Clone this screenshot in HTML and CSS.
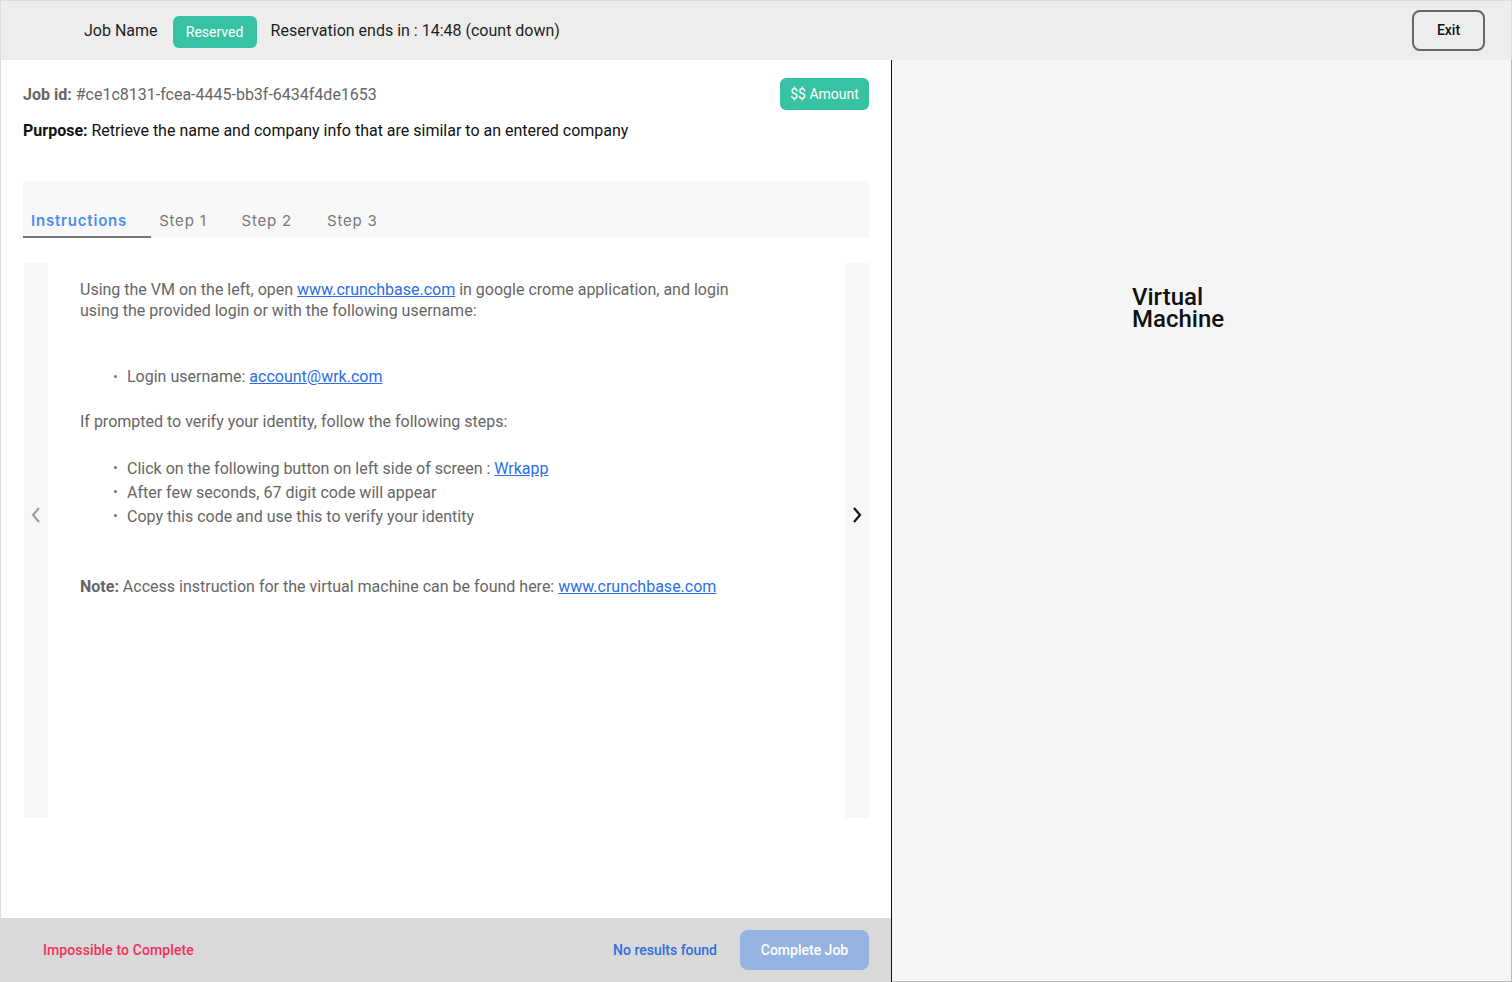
FILE: index.html
```html
<!DOCTYPE html>
<html>
<head>
<meta charset="utf-8">
<link rel="stylesheet" href="styles.css">
</head>
<body>
<div class="app">
  <header class="topbar">
    <span class="job-name">Job Name</span>
    <span class="badge">Reserved</span>
    <span class="countdown">Reservation ends in : 14:48 (count down)</span>
    <span class="spacer"></span>
    <button class="exit">Exit</button>
  </header>
  <div class="main">
    <section class="left">
      <div class="left-body">
        <div class="meta-row">
          <div class="jobid"><b>Job id:</b> #ce1c8131-fcea-4445-bb3f-6434f4de1653</div>
          <button class="amount">$$ Amount</button>
        </div>
        <div class="purpose"><b>Purpose:</b> Retrieve the name and company info that are similar to an entered company</div>
        <nav class="tabs">
          <span class="tab active">Instructions</span>
          <span class="tab">Step 1</span>
          <span class="tab">Step 2</span>
          <span class="tab">Step 3</span>
        </nav>
        <div class="carousel">
          <div class="side side-left">
            <svg width="14" height="20" viewBox="0 0 14 20"><path d="M10 3 L4 10 L10 17" fill="none" stroke="#9a9a9a" stroke-width="2"/></svg>
          </div>
          <div class="slide">
            <p class="p1">Using the VM on the left, open <a href="#">www.crunchbase.com</a> in google crome application, and login using the provided login or with the following username:</p>
            <ul class="list l1">
              <li>Login username: <a href="#">account@wrk.com</a></li>
            </ul>
            <p class="p2">If prompted to verify your identity, follow the following steps:</p>
            <ul class="list l2">
              <li>Click on the following button on left side of screen : <a href="#">Wrkapp</a></li>
              <li>After few seconds, 67 digit code will appear</li>
              <li>Copy this code and use this to verify your identity</li>
            </ul>
            <p class="note"><b>Note:</b> Access instruction for the virtual machine can be found here: <a href="#">www.crunchbase.com</a></p>
          </div>
          <div class="side side-right">
            <svg width="14" height="20" viewBox="0 0 14 20"><path d="M4 3 L10 10 L4 17" fill="none" stroke="#111" stroke-width="2.2"/></svg>
          </div>
        </div>
      </div>
      <footer class="footer">
        <span class="impossible">Impossible to Complete</span>
        <span class="spacer"></span>
        <span class="noresults">No results found</span>
        <button class="complete">Complete Job</button>
      </footer>
    </section>
    <section class="right">
      <div class="vm">Virtual<br>Machine</div>
    </section>
  </div>
</div>
</body>
</html>
```

FILE: styles.css
```css
* { box-sizing: border-box; }
html, body { margin: 0; padding: 0; }
body {
  font-family: Roboto, "Liberation Sans", sans-serif;
  color: #222;
  width: 1512px;
  height: 982px;
  overflow: hidden;
}
.app {
  display: flex;
  flex-direction: column;
  height: 982px;
}
.topbar {
  height: 60px;
  flex: none;
  background: #ededed;
  border-top: 1px solid #dcdcdc;
  border-left: 1px solid #dcdcdc;
  border-right: 1px solid #dcdcdc;
  display: flex;
  align-items: center;
  padding: 0 26px 0 83px;
}
.job-name { font-size: 16px; color: #1e1e1e; }
.badge {
  margin-left: 15px;
  background: #38c2a4;
  color: #fff;
  font-size: 14px;
  height: 32px;
  width: 84px;
  border-radius: 6px;
  display: flex;
  align-items: center;
  justify-content: center;
  margin-top: 2px;
}
.countdown { margin-left: 14px; font-size: 16px; color: #1e1e1e; }
.spacer { flex: 1; }
.exit {
  width: 73px;
  height: 41px;
  border: 2px solid #666;
  border-radius: 8px;
  background: transparent;
  font-family: Roboto, sans-serif;
  font-weight: 500;
  font-size: 14px;
  color: #111;
  margin-top: -1px;
}
.main { flex: 1; display: flex; min-height: 0; }
.left {
  width: 892px;
  flex: none;
  background: #fff;
  border-left: 1px solid #dcdcdc;
  border-right: 1px solid #111;
  display: flex;
  flex-direction: column;
}
.left-body { flex: 1; padding: 18px 22px 0 22px; }
.meta-row { display: flex; justify-content: space-between; align-items: center; }
.jobid { font-size: 16px; color: #666; }
.jobid b { color: #666; font-weight: 700; }
.amount {
  width: 89px;
  height: 32px;
  border: none;
  border-radius: 6px;
  background: #38c2a4;
  color: #fff;
  font-family: Roboto, sans-serif;
  font-size: 14px;
  padding: 0;
}
.purpose { font-size: 16px; color: #111; margin-top: 11px; }
.tabs {
  margin-top: 41px;
  height: 57px;
  background: #f8f8f8;
  display: flex;
  align-items: flex-end;
}
.tab {
  font-family: Inter, "Open Sans", sans-serif;
  font-size: 15px;
  letter-spacing: 0.8px;
  color: #777;
  padding: 0 0 6px 0;
  border-bottom: 2px solid transparent;
  margin-right: 35px;
}
.tab.active {
  color: #4a8ef0;
  font-weight: 600;
  padding: 0 24px 6px 8px;
  border-bottom: 2px solid #777;
  margin-right: 8px;
}
.carousel {
  margin-top: 25px;
  height: 555px;
  display: flex;
}
.side {
  width: 24px;
  background: #f7f7f7;
  flex: none;
  display: flex;
  align-items: center;
  justify-content: center;
}
.side-left { margin-left: 1px; }
.side svg { display: block; margin-top: -52px; }
.slide {
  flex: 1;
  padding: 16px 32px 0 32px;
  font-size: 16px;
  color: #666;
  line-height: 21px;
}
.slide p { margin: 0; }
.slide a { color: #2a6ee8; text-decoration: underline; }
.slide .p1 { width: 660px; }
.list { margin: 0; padding-left: 47px; list-style: none; }
.list li { position: relative; }
.list li::before {
  content: "";
  position: absolute;
  left: -13px;
  top: 9px;
  width: 3px;
  height: 3px;
  border-radius: 50%;
  background: #777;
}
.slide .l1 { margin-top: 45px; }
.slide .p2 { margin-top: 24px; }
.slide .l2 { margin-top: 25px; }
.l2 li { line-height: 24px; }
.slide .note { margin-top: 47px; }
.note b { font-weight: 700; }
.footer {
  height: 64px;
  flex: none;
  background: #d9d9d9;
  display: flex;
  align-items: center;
  padding: 0 22px 0 42px;
}
.impossible { color: #f0305a; font-size: 14px; font-weight: 500; letter-spacing: 0.1px; }
.noresults { color: #2f6fe0; font-size: 14px; font-weight: 500; margin-right: 23px; }
.complete {
  width: 129px;
  height: 40px;
  border: none;
  border-radius: 8px;
  background: #95b3e0;
  color: #fff;
  font-family: Roboto, sans-serif;
  font-size: 14px;
  font-weight: 500;
  padding: 0;
}
.right {
  flex: 1;
  background: #f5f5f5;
  border-right: 1px solid #bbb;
  border-bottom: 1px solid #bbb;
  padding: 226px 0 0 240px;
}
.vm {
  font-size: 24px;
  line-height: 22px;
  font-weight: 500;
  color: #111;
}
```
